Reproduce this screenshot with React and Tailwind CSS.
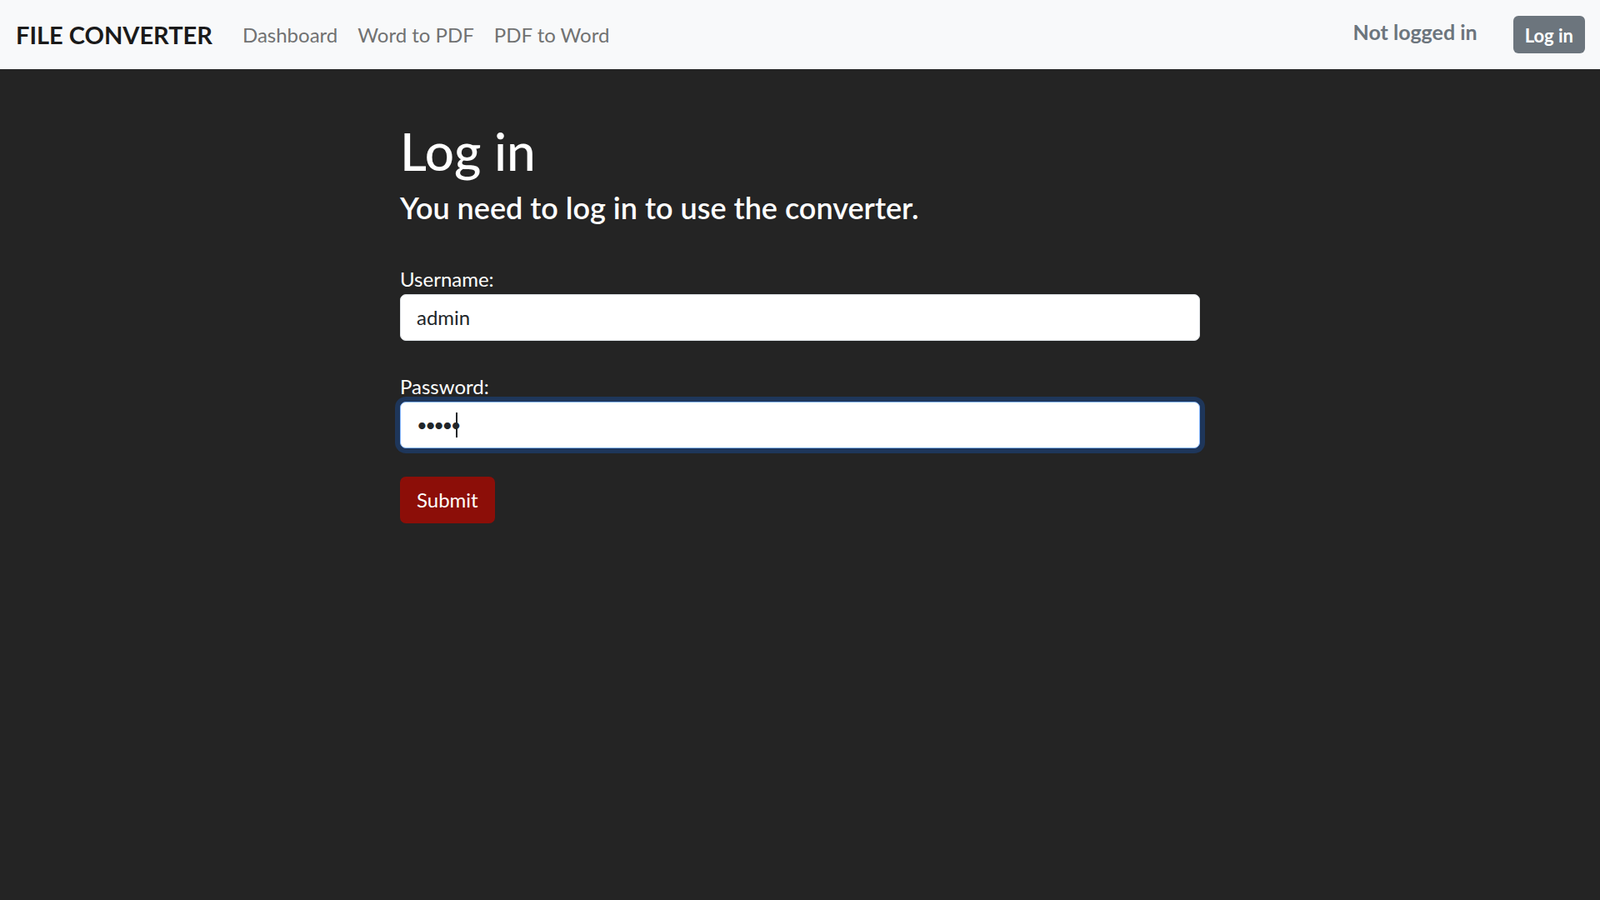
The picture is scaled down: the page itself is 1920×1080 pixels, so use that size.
export default function App() {
  return (
    <div className="min-h-screen bg-[#242424] font-['Lato','Open_Sans',sans-serif]">
      <nav className="flex h-[83px] items-center justify-between bg-[#f8f9fa] pl-[19px] pr-[18px]">
        <div className="flex items-center">
          <a className="mr-[24px] text-[29px] font-bold leading-[1.5] text-[#1a1a1a]">FILE CONVERTER</a>
          <a className="px-[12px] text-[24px] leading-[1.5] text-[#717272]">Dashboard</a>
          <a className="px-[12px] text-[24px] leading-[1.5] text-[#717272]">Word to PDF</a>
          <a className="px-[12px] text-[24px] leading-[1.5] text-[#717272]">PDF to Word</a>
        </div>
        <div className="flex items-center gap-[43px]">
          <span className="mb-[6px] text-[25px] font-bold leading-[1.5] text-[#6c757d]">Not logged in</span>
          <button className="h-[45px] rounded-[6px] bg-[#6c757d] px-[14px] pt-[2px] text-[22px] font-bold leading-[1.5] text-white">
            Log in
          </button>
        </div>
      </nav>

      <main className="mx-auto w-[960px]">
        <h1 className="mt-[61px] mb-[10px] text-[62px] font-medium leading-[1.2] text-white">Log in</h1>
        <h4 className="text-[36px] font-semibold leading-[1.2] text-white">You need to log in to use the converter.</h4>

        <form className="mt-[45px]" onSubmit={(e) => e.preventDefault()}>
          <label className="block text-[24px] leading-[1.5] text-white">Username:</label>
          <input
            type="text"
            readOnly
            defaultValue="admin"
            className="block h-[56px] w-full rounded-[7px] border border-[#dee2e6] bg-white px-[19px] text-[24px] text-[#212529] outline-none"
          />

          <label className="mt-[37px] block text-[24px] leading-[1.5] text-white">Password:</label>
          <div className="relative">
            <input
              type="password"
              readOnly
              defaultValue="admin"
              className="block h-[56px] w-full rounded-[7px] border border-[#86b7fe] bg-white px-[19px] text-[22px] tracking-[-2.6px] text-[#212529] shadow-[0_0_0_6px_#1e365a] outline-none"
            />
            <span className="absolute left-[67px] top-[13px] h-[30px] w-[2px] bg-[#212529]" />
          </div>

          <button
            type="submit"
            className="mt-[34px] h-[56px] rounded-[7px] bg-[#8c0e08] px-[20px] text-[24px] leading-[1.5] text-white"
          >
            Submit
          </button>
        </form>
      </main>
    </div>
  )
}
